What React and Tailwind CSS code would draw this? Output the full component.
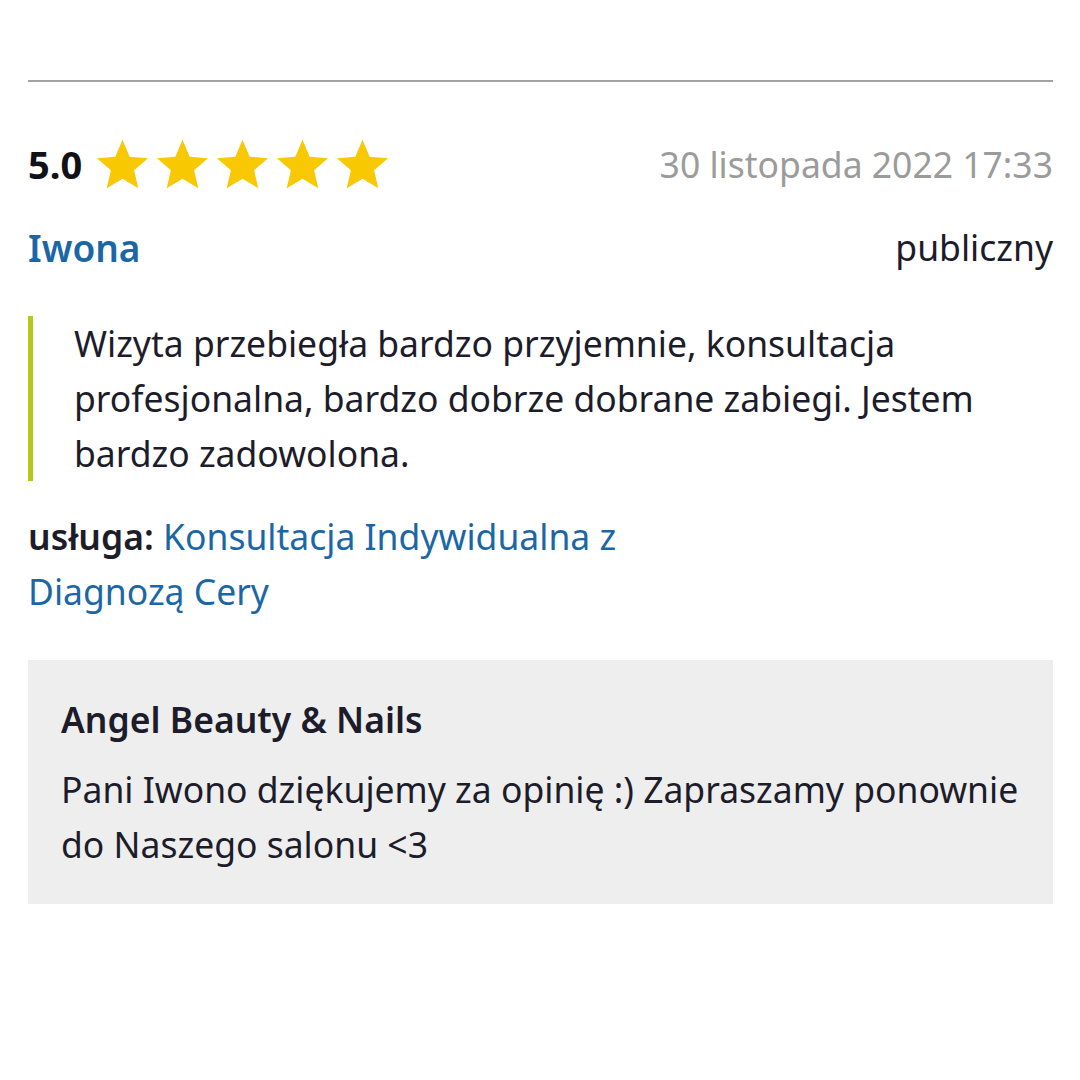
import React from 'react';

const Star = () => (
    <svg width="51" height="50" viewBox="1.05 0.6 21.9 20.8" className="shrink-0">
        <path d="M12 0.6l3.09 7.26 7.86 0.68-5.96 5.17 1.79 7.69L12 17.3l-6.78 4.1 1.79-7.69-5.96-5.17 7.86-0.68z" fill="#f8c902" />
    </svg>
);

export default function App() {
    return (
        <div className="min-h-screen bg-white px-[28px] pt-[80px] text-[35.5px] leading-[55px] text-[#1c1c2a]" style={{ fontFamily: '"Noto Sans", "Open Sans", sans-serif' }}>
            <div className="h-[2px] w-[1025px] bg-[#a3a3a3]"></div>

            {/* rating + date */}
            <div className="w-[1025px] mt-[56px] h-[52px] flex items-center justify-between">
                <div className="flex items-center">
                    <span className="font-bold text-[38px] mr-[15px] text-[#111118]">5.0</span>
                    <div className="flex gap-[9px]">
                        <Star /><Star /><Star /><Star /><Star />
                    </div>
                </div>
                <span className="text-[#9b9b9b]">30 listopada 2022 17:33</span>
            </div>

            <div className="w-[1025px] mt-[30px] flex items-center justify-between">
                <span className="font-semibold text-[37px] text-[#1b67a6]">Iwona</span>
                <span>publiczny</span>
            </div>

            <blockquote className="w-[1025px] mt-[41px] border-l-[5px] border-[#b6c918] pl-[41px] pr-[40px]">
                Wizyta przebiegła bardzo przyjemnie, konsultacja profesjonalna, bardzo dobrze dobrane zabiegi. Jestem bardzo zadowolona.
            </blockquote>

            <p className="mt-[28px] max-w-[640px]">
                <span className="font-semibold">usługa:</span>{' '}
                <a className="text-[#1b67a6]">Konsultacja Indywidualna z Diagnozą Cery</a>
            </p>

            {/* salon reply */}
            <div className="w-[1025px] mt-[41px] bg-[#eeeeee] px-[33px] pt-[32px] pb-[32px]">
                <h4 className="font-semibold">Angel Beauty &amp; Nails</h4>
                <p className="mt-[15px]">Pani Iwono dziękujemy za opinię :) Zapraszamy ponownie do Naszego salonu &lt;3</p>
            </div>
        </div>
    );
}
